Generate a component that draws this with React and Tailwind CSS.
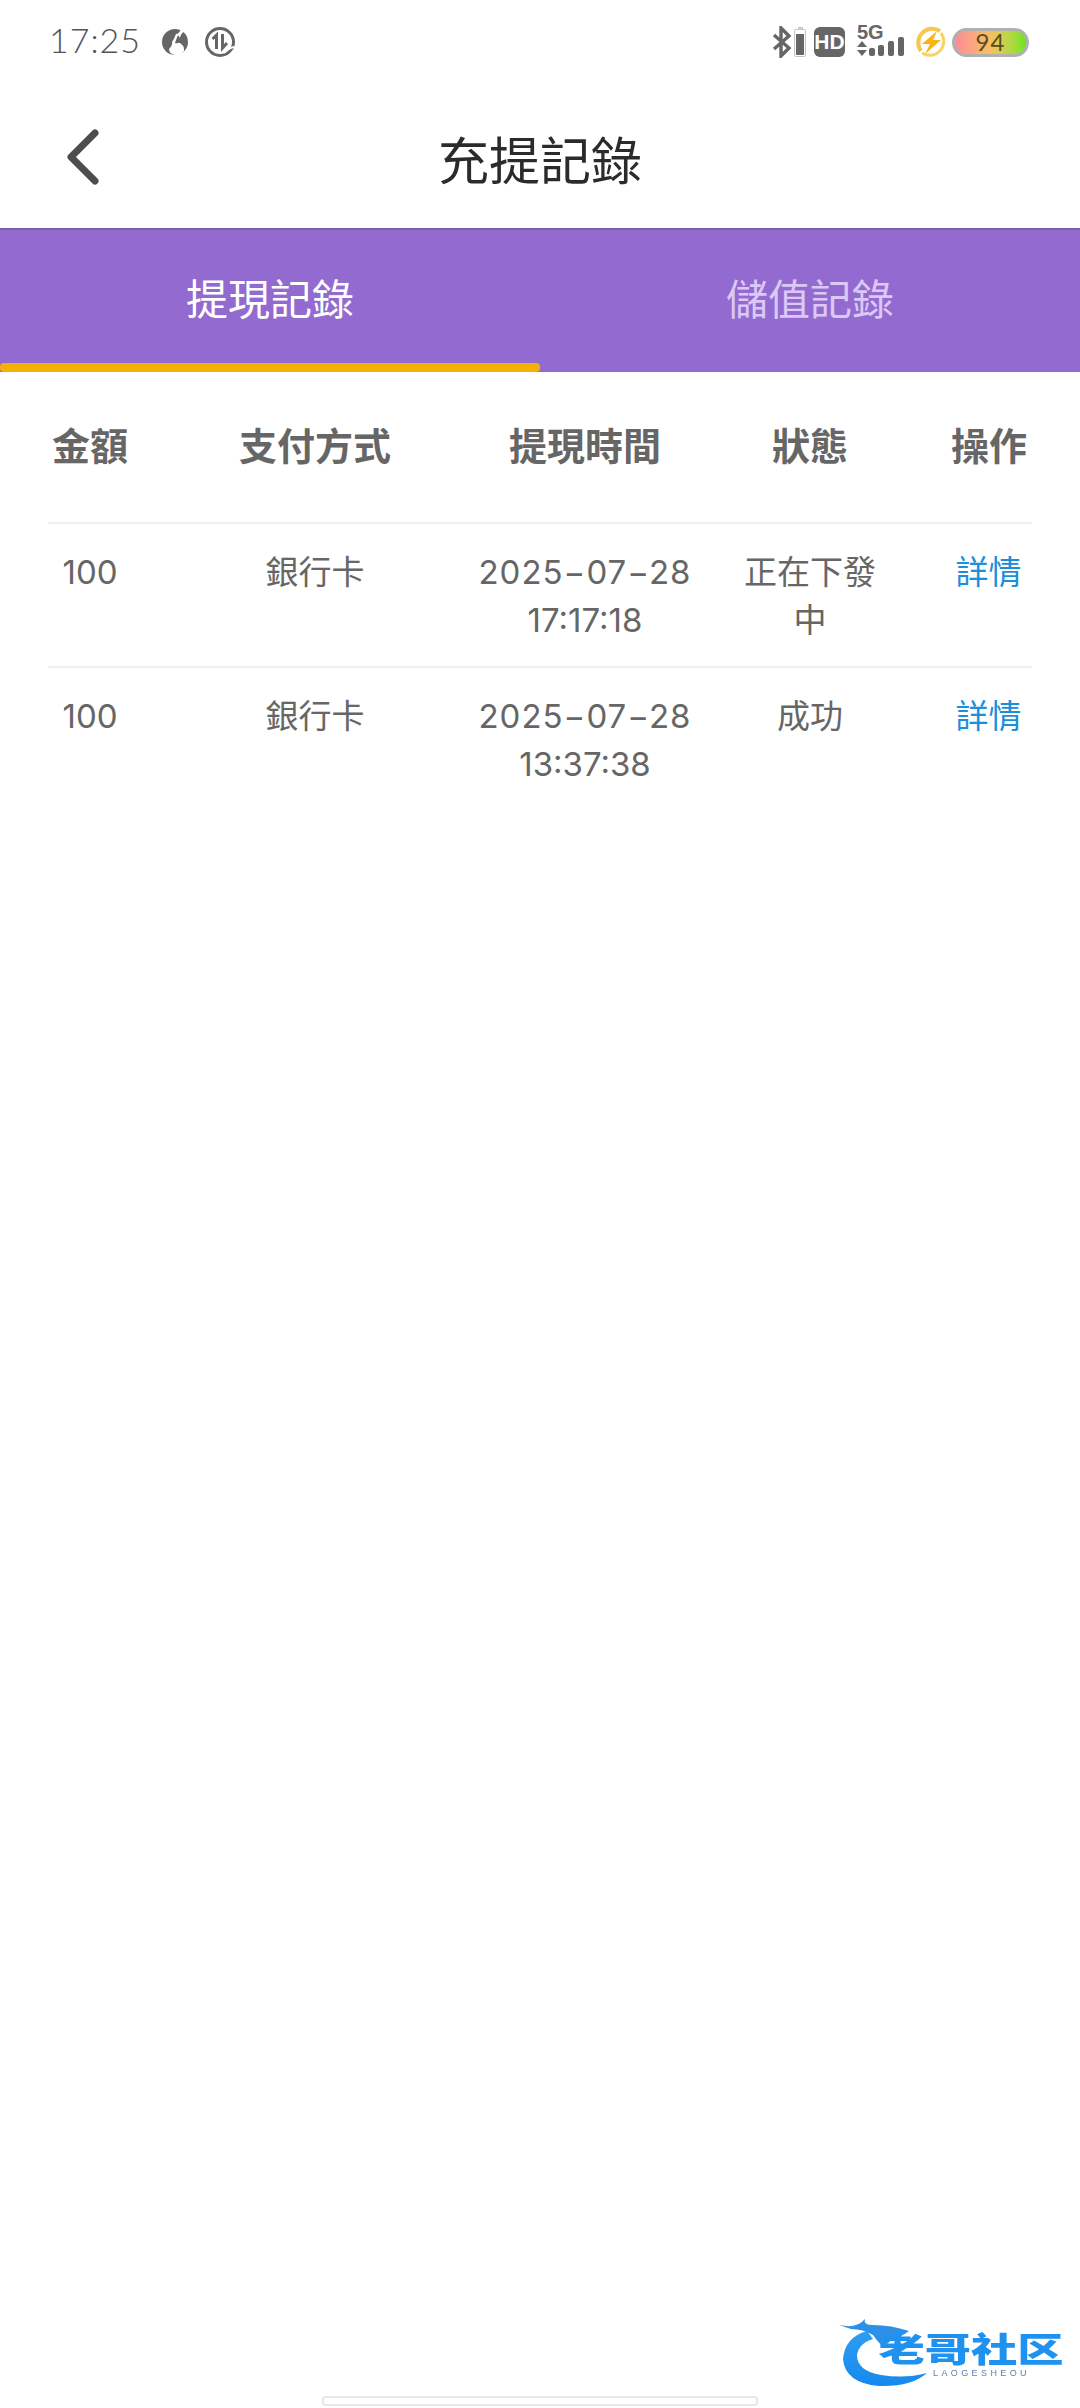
const cjk = "font-['Inter','Noto_Sans_CJK_TC',sans-serif]";

const rows = [
  { amount: "100", method: "銀行卡", date: "2025−07−28", time: "17:17:18", status: "正在下發中" },
  { amount: "100", method: "銀行卡", date: "2025−07−28", time: "13:37:38", status: "成功" },
];

function GlobeIcon() {
  return (
    <svg width="28" height="30" viewBox="0 0 28 30">
      <circle cx="14" cy="15" r="13" fill="#666" />
      <path d="M20 2 L24 3 Q20 7 19 10 L17 15 Q24 18 23 24 Q20 29 14 28 Q8 27 8 22 Q12 18 11 15 Q14 10 15 7 Q18 7 20 2 Z" fill="#fff" />
      <path d="M17 8 Q15 13 14 16 Q19 17 20 13 Z" fill="#666" />
    </svg>
  );
}

function DataIcon() {
  return (
    <svg width="32" height="32" viewBox="0 0 32 32" fill="none">
      <circle cx="16" cy="16" r="13.5" stroke="#666" strokeWidth="3" />
      <path d="M12.5 23 V9 L8.5 13" stroke="#666" strokeWidth="3" />
      <path d="M18.5 8 V22 L23 17" stroke="#666" strokeWidth="3" />
      <path d="M20 27 Q24 22 30 21" stroke="#fff" strokeWidth="2" />
    </svg>
  );
}

function BluetoothIcon() {
  return (
    <svg width="20" height="32" viewBox="0 0 20 32" fill="none">
      <path d="M2 9 L17 22 L9 30 V2 L17 10 L2 23" stroke="#666" strokeWidth="3.4" />
    </svg>
  );
}

function SimBattery() {
  return (
    <div className="flex flex-col items-center">
      <div className="w-[5px] h-[2px] bg-[#ccc]" />
      <div className="w-[12px] h-[28px] border border-[#c4c4c4] rounded-[2px] flex items-end p-[1px]">
        <div className="w-full h-[21px] bg-[#666]" />
      </div>
    </div>
  );
}

function SignalIcon() {
  return (
    <div className="relative w-[48px] h-[32px]">
      <span className="absolute left-0 top-[-4px] font-['Liberation_Sans',sans-serif] font-bold text-[20px] leading-[20px] text-[#666]">5G</span>
      <svg className="absolute left-0 top-0" width="48" height="32" viewBox="0 0 48 32" fill="#666">
        <path d="M5 15 L0 21 H10 Z" />
        <path d="M0 24 H10 L5 30 Z" />
        <rect x="12" y="22" width="6" height="8" rx="2" />
        <rect x="21" y="19" width="6" height="11" rx="2" />
        <rect x="31" y="15" width="6" height="15" rx="2" />
        <rect x="41" y="11" width="6" height="19" rx="2" />
      </svg>
    </div>
  );
}

function ChargeIcon() {
  return (
    <svg width="32" height="32" viewBox="0 0 32 32" fill="none">
      <path d="M25 5 A14 14 0 0 0 6 25" stroke="#f6c94e" strokeWidth="4" />
      <path d="M7 27 A14 14 0 0 0 26 7" stroke="#f8d468" strokeWidth="3" />
      <path d="M22 5 L7 18 H15 L10 28 L26 14 H18 Z" fill="#f9b312" />
    </svg>
  );
}

function DragonLogo() {
  return (
    <svg className="absolute left-0 top-0" width="120" height="80" viewBox="0 0 120 80">
      <defs>
        <linearGradient id="arc" x1="0" y1="0" x2="0" y2="1">
          <stop offset="0" stopColor="#2f9df0" />
          <stop offset="1" stopColor="#1689ee" />
        </linearGradient>
      </defs>
      <path d="M28 16 Q6 22 4 44 Q6 68 40 71 Q72 72 88 58 Q66 64 42 60 Q18 56 18 40 Q20 28 34 24 Z" fill="url(#arc)" />
      <path d="M0 10 Q18 14 26 4 Q24 10 34 10 Q52 10 70 16 Q62 22 54 24 L44 32 Q38 26 34 20 Q24 14 12 14 Z" fill="#2d90e8" />
    </svg>
  );
}

function HeaderCell({ className, children }) {
  return <div className={className}>{children}</div>;
}

export default function App() {
  return (
    <div className={`relative w-[1080px] h-[2408px] bg-white overflow-hidden ${cjk}`}>
      {/* status bar */}
      <div className="h-[84px] flex items-center justify-between pl-[49px] pr-[51px]">
        <div className="flex items-center">
          <span className="font-['Lato',sans-serif] font-light text-[34px] leading-none tracking-[1px] text-[#555] w-[112px] -translate-y-[2px]">17:25</span>
          <GlobeIcon />
          <div className="ml-[15px]"><DataIcon /></div>
        </div>
        <div className="flex items-center">
          <BluetoothIcon />
          <div className="ml-[2px]"><SimBattery /></div>
          <div className="ml-[8px] w-[31px] h-[30px] rounded-[6px] bg-[#666] flex items-center justify-center font-['Liberation_Sans',sans-serif] font-bold text-[21px] text-white">HD</div>
          <div className="ml-[12px]"><SignalIcon /></div>
          <div className="ml-[10px]"><ChargeIcon /></div>
          <div className="ml-[5px] w-[77px] h-[29px] rounded-full border-[3px] border-[#b0b0b0] bg-gradient-to-r from-[#ff8a96] via-[#f4c060] to-[#66e61c] flex items-center justify-center font-['Lato',sans-serif] text-[24px] leading-none tracking-[1px] text-[#5a4c1e]">94</div>
        </div>
      </div>

      {/* title bar */}
      <div className="relative h-[144px] flex items-center justify-center pt-[10px]">
        <svg className="absolute left-[64px] top-[45px]" width="40" height="58" viewBox="0 0 40 58" fill="none">
          <path d="M31 4 L7 28 L31 52" stroke="#4d4d4d" strokeWidth="7" strokeLinecap="round" strokeLinejoin="round" />
        </svg>
        <h1 className="text-[51px] font-normal leading-none text-[#2b2b2b]">充提記錄</h1>
      </div>

      {/* tabs */}
      <div className="flex h-[144px] bg-[#936bd0] border-t-2 border-[#7d5ead]">
        <div className="relative w-1/2 flex items-center justify-center text-[42px] leading-none text-white pb-[2px]">
          提現記錄
          <div className="absolute left-0 right-0 bottom-0 h-[9px] rounded-[4px] bg-[#f5b006]" />
        </div>
        <div className="w-1/2 flex items-center justify-center text-[42px] leading-none text-[#dcc8f6] pb-[2px]">儲值記錄</div>
      </div>

      {/* record table */}
      <div className="mx-[48px] w-[984px]">
        <div className="grid grid-cols-[122px_290px_250px_200px_122px] h-[152px] items-center border-b-2 border-[#f0f0f0] text-[38px] font-bold text-[#666] leading-none pb-[3px]">
          <HeaderCell className="pr-[38px] text-center whitespace-nowrap">金額</HeaderCell>
          <HeaderCell className="text-center">支付方式</HeaderCell>
          <HeaderCell className="text-center">提現時間</HeaderCell>
          <HeaderCell className="text-center">狀態</HeaderCell>
          <HeaderCell className="pl-[36px] text-center whitespace-nowrap">操作</HeaderCell>
        </div>
        {rows.map((row) => (
          <div
            key={row.time}
            className="grid grid-cols-[122px_290px_250px_200px_122px] h-[144px] pt-[24px] border-b-2 border-[#f0f0f0] last:border-b-0 text-[33px] leading-[48px] text-[#666]"
          >
            <div className="pr-[38px] text-center">{row.amount}</div>
            <div className="text-center">{row.method}</div>
            <div className="text-center">
              <div className="tracking-[1px] whitespace-nowrap">{row.date}</div>
              <div>{row.time}</div>
            </div>
            <div className="px-[30px] text-center">{row.status}</div>
            <div className="pl-[35px] text-center text-[#1b8fdc] whitespace-nowrap">詳情</div>
          </div>
        ))}
      </div>

      {/* community watermark */}
      <div className="absolute left-[839px] top-[2315px] w-[225px] h-[76px] blur-[0.6px]">
        <DragonLogo />
        <div className="absolute left-[42px] top-[15px] w-[180px] text-center text-[34px] leading-[40px] font-black whitespace-nowrap scale-x-[1.36] text-[#1e92ee]">老哥社区</div>
        <div className="absolute left-[94px] top-[53px] text-[9px] leading-[10px] tracking-[3.4px] font-['Liberation_Sans',sans-serif] text-[#5a7fb0]">LAOGESHEOU</div>
      </div>

      {/* gesture bar */}
      <div className="absolute left-[322px] top-[2396px] w-[436px] h-[10px] rounded-[4px] border-2 border-[#e8e8e8] bg-white" />
    </div>
  );
}
